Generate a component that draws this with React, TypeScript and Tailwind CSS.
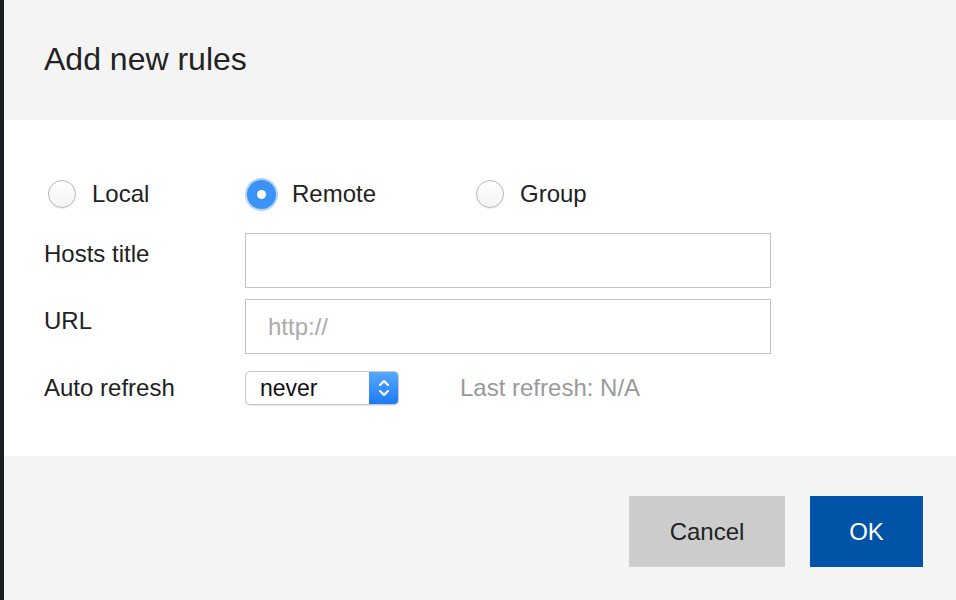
import React from "react";

const font = { fontFamily: '"Liberation Sans", Arial, Helvetica, sans-serif' };

function Radio({ label, checked, width }: { label: string; checked?: boolean; width: string }) {
  return (
    <label className={`flex items-center gap-[16px] ${width}`}>
      {checked ? (
        <span className="flex h-[29px] w-[29px] shrink-0 items-center justify-center rounded-full bg-[#3b93f8] shadow-[0_0_0_2px_#b3d3fb]">
          <span className="h-[9px] w-[9px] rounded-full bg-white" />
        </span>
      ) : (
        <span className="h-[28px] w-[28px] shrink-0 rounded-full border border-[#b8b8b8] bg-gradient-to-b from-white to-[#f4f4f4] shadow-[0_1px_1px_rgba(0,0,0,0.08)]" />
      )}
      <span className="text-[24px] leading-[24px] text-[#222]">{label}</span>
    </label>
  );
}

export default function App() {
  return (
    <div className="flex h-[600px] w-[956px] overflow-hidden" style={font}>
      <div className="w-[4px] shrink-0 bg-[#1a1d21]" />
      <div className="flex flex-1 flex-col">
        {/* header */}
        <div className="h-[120px] bg-[#f4f4f4] pl-[40px] pt-[43px]">
          <h1 className="text-[32px] leading-[32px] text-[#222]">Add new rules</h1>
        </div>

        {/* body */}
        <div className="h-[336px] bg-white pl-[40px] pt-[60px]">
          <div className="ml-[4px] flex h-[28px] items-center">
            <Radio label="Local" width="w-[199px]" />
            <Radio label="Remote" checked width="w-[229px]" />
            <Radio label="Group" width="w-[200px]" />
          </div>

          <div className="mt-[25px] flex items-start">
            <div className="w-[201px] pt-[9px] text-[24px] leading-[24px] text-[#222]">Hosts title</div>
            <input className="h-[55px] w-[526px] border border-[#c3c3c3] bg-white px-[22px] text-[24px] outline-none" />
          </div>

          <div className="mt-[11px] flex items-start">
            <div className="w-[201px] pt-[10px] text-[24px] leading-[24px] text-[#222]">URL</div>
            <input
              placeholder="http://"
              className="h-[55px] w-[526px] border border-[#c3c3c3] bg-white px-[22px] text-[24px] outline-none placeholder:text-[#ababab]"
            />
          </div>

          <div className="mt-[17px] flex items-center">
            <div className="w-[201px] text-[24px] leading-[24px] text-[#222]">Auto refresh</div>
            <div className="flex h-[34px] w-[154px] overflow-hidden rounded-[5px] border border-[#c9c9c9] bg-white shadow-[0_1px_1px_rgba(0,0,0,0.1)]">
              <div className="flex flex-1 items-center pl-[14px] text-[23px] leading-[24px] text-[#111]">never</div>
              <div className="flex w-[29px] items-center justify-center bg-gradient-to-b from-[#56a8fb] to-[#1a7bf4]">
                <svg width="14" height="22" viewBox="0 0 14 22" fill="none" stroke="white" strokeWidth="2" strokeLinecap="round" strokeLinejoin="round">
                  <path d="M3 8 L7 4 L11 8" />
                  <path d="M3 14 L7 18 L11 14" />
                </svg>
              </div>
            </div>
            <div className="ml-[61px] text-[24px] leading-[24px] text-[#9a9a9a]">Last refresh: N/A</div>
          </div>
        </div>

        {/* footer */}
        <div className="flex flex-1 justify-end gap-[25px] bg-[#f4f4f4] pr-[33px] pt-[40px]">
          <button className="h-[71px] w-[156px] bg-[#cccccc] text-[24px] text-[#222]">Cancel</button>
          <button className="h-[71px] w-[113px] bg-[#0053a6] text-[24px] text-white">OK</button>
        </div>
      </div>
    </div>
  );
}
